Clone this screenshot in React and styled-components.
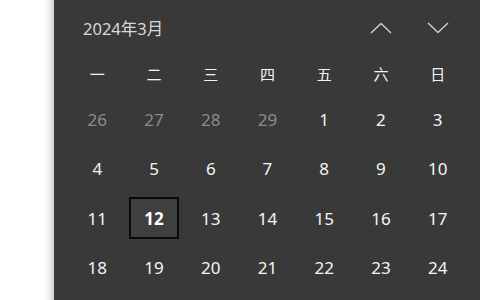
import styled, { createGlobalStyle, css } from 'styled-components';

const GlobalStyle = createGlobalStyle`
  html, body {
    margin: 0;
    padding: 0;
    background: #ffffff;
  }
  #root {
    width: 480px;
    height: 300px;
    overflow: hidden;
  }
`;

const WEEKDAYS = ['一', '二', '三', '四', '五', '六', '日'];

const DAYS = [
  [26, 27, 28, 29, 1, 2, 3],
  [4, 5, 6, 7, 8, 9, 10],
  [11, 12, 13, 14, 15, 16, 17],
  [18, 19, 20, 21, 22, 23, 24],
];

export default function App() {
  return (
    <>
      <GlobalStyle />
      <StyledPage>
        <StyledSideArea />
        <StyledCalendar>
          <StyledHeader>
            <StyledMonthLabel>2024年3月</StyledMonthLabel>
            <StyledNav>
              <StyledNavButton aria-label="上个月">
                <svg width="22" height="12" viewBox="0 0 22 12">
                  <polyline points="1,11 11,1.5 21,11" fill="none" stroke="#cfcfcf" strokeWidth="1.4" />
                </svg>
              </StyledNavButton>
              <StyledNavButton aria-label="下个月">
                <svg width="22" height="12" viewBox="0 0 22 12">
                  <polyline points="1,1 11,10.5 21,1" fill="none" stroke="#cfcfcf" strokeWidth="1.4" />
                </svg>
              </StyledNavButton>
            </StyledNav>
          </StyledHeader>

          <StyledWeekRow>
            {WEEKDAYS.map((d) => (
              <StyledWeekday key={d}>{d}</StyledWeekday>
            ))}
          </StyledWeekRow>

          <StyledDayGrid>
            {DAYS.flatMap((week, wi) =>
              week.map((day) => {
                const isOutside = wi === 0 && day > 20;
                const isToday = wi === 2 && day === 12;
                return (
                  <StyledDayCell key={`${wi}-${day}`}>
                    <StyledDay $outside={isOutside} $today={isToday}>
                      {day}
                    </StyledDay>
                  </StyledDayCell>
                );
              })
            )}
          </StyledDayGrid>
        </StyledCalendar>
      </StyledPage>
    </>
  );
}

// styled-components

const StyledPage = styled.div`
  display: flex;
  width: 480px;
  height: 300px;
  font-family: 'Noto Sans', 'Noto Sans CJK SC', sans-serif;
`;

const StyledSideArea = styled.div`
  width: 54px;
  flex-shrink: 0;
  background: linear-gradient(
    to right,
    #ffffff 0%,
    #ffffff 82%,
    #ececec 92%,
    #cfcfcf 100%
  );
`;

const StyledCalendar = styled.div`
  flex: 1;
  display: flex;
  flex-direction: column;
  padding: 0 14px 0 15px;
  background: #393939;
  color: #ffffff;
`;

const StyledHeader = styled.div`
  height: 56px;
  display: flex;
  align-items: center;
  justify-content: space-between;
`;

const StyledMonthLabel = styled.div`
  padding-left: 14px;
  font-size: 16.5px;
  color: #d8d8d8;
`;

const StyledNav = styled.div`
  display: flex;
  width: 113px;
`;

const StyledNavButton = styled.button`
  width: 56.7px;
  height: 40px;
  display: flex;
  align-items: center;
  justify-content: center;
  padding: 0;
  border: none;
  background: transparent;
  cursor: pointer;
`;

const StyledWeekRow = styled.div`
  display: grid;
  grid-template-columns: repeat(7, 1fr);
  height: 35px;
  align-items: center;
  margin-bottom: 3px;
`;

const StyledWeekday = styled.div`
  text-align: center;
  font-size: 15px;
  color: #f2f2f2;
`;

const StyledDayGrid = styled.div`
  display: grid;
  grid-template-columns: repeat(7, 1fr);
  grid-auto-rows: 49.3px;
`;

const StyledDayCell = styled.div`
  display: flex;
  align-items: center;
  justify-content: center;
`;

const StyledDay = styled.div`
  width: 50px;
  height: 42px;
  margin-top: 2px;
  box-sizing: border-box;
  display: flex;
  align-items: center;
  justify-content: center;
  font-size: 17px;
  color: ${({ $outside }) => ($outside ? '#8c8c8c' : '#f5f5f5')};

  ${({ $today }) =>
    $today &&
    css`
      border: 2px solid #0a0a0a;
      background: #3f3f3f;
      font-weight: 700;
      color: #ffffff;
    `}
`;
